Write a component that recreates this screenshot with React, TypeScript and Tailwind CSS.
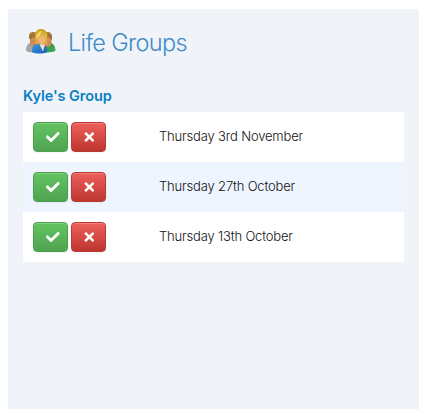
import React from 'react';
import { FaCheck, FaTimes } from 'react-icons/fa';

interface Meeting {
  id: number;
  date: string;
}

const meetings: Meeting[] = [
  { id: 1, date: 'Thursday 3rd November' },
  { id: 2, date: 'Thursday 27th October' },
  { id: 3, date: 'Thursday 13th October' },
];

const GroupIcon = () => (
  <svg className="w-8 h-8 shrink-0" viewBox="0 0 32 32" aria-hidden="true">
    <defs>
      <linearGradient id="hair" x1="0" y1="0" x2="0" y2="1">
        <stop offset="0" stopColor="#c4a01a" />
        <stop offset="0.5" stopColor="#e2b93c" />
        <stop offset="1" stopColor="#dca045" />
      </linearGradient>
      <linearGradient id="brown" x1="0" y1="0" x2="0" y2="1">
        <stop offset="0" stopColor="#b0823f" />
        <stop offset="1" stopColor="#8f5e2c" />
      </linearGradient>
      <linearGradient id="blue" x1="0" y1="0" x2="1" y2="1">
        <stop offset="0" stopColor="#3d9ae4" />
        <stop offset="1" stopColor="#1560b4" />
      </linearGradient>
      <linearGradient id="green" x1="0" y1="0" x2="1" y2="1">
        <stop offset="0" stopColor="#2c8a3c" />
        <stop offset="1" stopColor="#3fb05c" />
      </linearGradient>
    </defs>
    {/* left person */}
    <path d="M1 24.800c0-4.800 1.500-7.300 5-8.300l6 2v7.500c-4 .8-9 .5-11-1.200z" fill="#a6a6a8" />
    <path d="M5 8.500h8v8c0 3-2 4.500-4 4.500s-4-2-4-5z" fill="#cf8a55" />
    <path d="M4.300 12.500c-.8-4.500.7-6.500 4-6.500 2 0 4 .5 5 1.500v5c-3 0-4.500-.8-5.500-1.500-1.500.5-2 1.500-2.200 3z" fill="url(#brown)" />
    {/* right person */}
    <path d="M18 18.500l6-2.300c4 .8 6.500 3.800 6.500 8.600-2 1.500-8 2-12.500 1.200z" fill="url(#green)" />
    <path d="M18.500 8.500h8v8c0 3-2 4.500-4 4.500s-4-2-4-5z" fill="#cf8a55" />
    <path d="M26.800 13.500c.9-5-.8-7.500-4.500-7.500-2 0-3.500.5-4 1.500v5c3 0 4.500-.8 5.500-1.800 1 .5 1.800 1.500 2 2.800z" fill="url(#brown)" />
    {/* front person */}
    <path d="M7 26.300c0-5.300 1.500-8 6-9.300h4.500c3 .8 4.500 4 4.500 9.300-3.500 1.700-11.500 1.700-15 0z" fill="url(#blue)" />
    <path d="M14.500 18.500l4.500-1 1 1-2 7z" fill="#f4dcc8" />
    <path d="M10 17.500c.8-2.500-.2-5.500.2-9.300C10.800 4.500 12.800 3 15.800 3c4.200 0 6.400 2.500 6.600 6.500.1 3.200-.6 5.500.1 8.500-1.500 1.500-3 1.200-4 .3l-5-.3c-1.500.5-2.500.3-3.500-.5z" fill="url(#hair)" />
    <path d="M13.300 11.500c2-.5 3.500-1.800 4.300-3 .7 1.500 1.700 2.500 2.600 3.500 0 3.800-1.400 7-3.400 7s-3.500-3.500-3.500-7.500z" fill="#eeb47c" />
    <path d="M11.300 11c.5-3.500 2.500-5.500 5.200-6.300 0 3-1.500 5.500-5.200 7.800z" fill="#f1dd84" opacity=".8" />
  </svg>
);

const buttonClass =
  'flex items-center justify-center w-[35px] h-[30px] rounded-[4px] border text-white shadow-[inset_0_1px_0_rgba(255,255,255,0.2),0_1px_2px_rgba(0,0,0,0.05)]';

const MeetingRow = ({ meeting }: { meeting: Meeting }) => {
  return (
    <li className="flex items-center h-[50px] pl-2.5 bg-white even:bg-[#eef5fe]">
      <div className="flex gap-[3px] w-[126px]">
        <button
          aria-label="Attending"
          className={`${buttonClass} bg-linear-to-b from-[#62c462] to-[#51a351] border-[#4c9f4c]`}
        >
          <FaCheck className="w-3.5 h-3.5 translate-x-[1.8px]" />
        </button>
        <button
          aria-label="Not attending"
          className={`${buttonClass} bg-linear-to-b from-[#ee5f5b] to-[#bd362f] border-[#b73a35]`}
        >
          <FaTimes className="w-3.5 h-3.5 translate-x-[.3px]" />
        </button>
      </div>
      <span className="pb-0.5 text-[13px] leading-5 font-light tracking-[-0.17px] text-[#111]">{meeting.date}</span>
    </li>
  );
};

const App = () => {
  return (
    <div className="min-h-[418px] bg-white pt-[9px] pl-2 font-['Inter',sans-serif]">
      <section className="w-[411px] h-[400px] px-[15px] pt-[17px] bg-[#f0f4f9]">
        <header className="flex items-center h-8 pl-0.5">
          <GroupIcon />
          <h1 className="ml-[11px] pt-px text-[23.5px] leading-8 font-[350] tracking-[-0.65px] text-[#428bca]">
            Life Groups
          </h1>
        </header>
        <h2 className="mt-7 h-[26px] text-[14.5px] leading-5 font-semibold tracking-[-0.08px] text-[#0b7ec4]">
          Kyle's Group
        </h2>
        <ul>
          {meetings.map((meeting) => (
            <MeetingRow key={meeting.id} meeting={meeting} />
          ))}
        </ul>
      </section>
    </div>
  );
};

export default App;
